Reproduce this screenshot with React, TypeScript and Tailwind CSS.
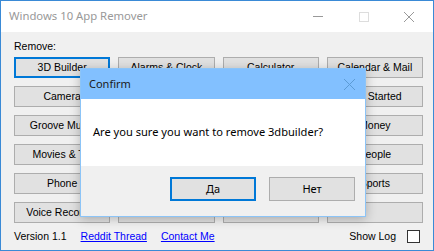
const apps = [
  ['3D Builder', 'Alarms & Clock', 'Calculator', 'Calendar & Mail'],
  ['Camera', 'Get Office', 'Get Skype', 'Get Started'],
  ['Groove Music', 'Maps', 'Solitaire', 'Money'],
  ['Movies & TV', 'News', 'OneNote', 'People'],
  ['Phone', 'Photos', 'Store', 'Sports'],
  ['Voice Recorder', 'Weather', 'Xbox', ''],
]

function WinButton({ label, focused }: { label: string; focused?: boolean }) {
  return (
    <div
      className={
        'h-[21px] flex items-center justify-center bg-[#e1e1e1] text-[10.5px] text-black whitespace-nowrap overflow-hidden ' +
        (focused ? 'border-2 border-[#0078d7]' : 'border border-[#adadad]')
      }
    >
      {label}
    </div>
  )
}

export default function App() {
  return (
    <div
      className="relative w-[434px] h-[251px] bg-[#f0f0f0] border border-[#3a8ad6] overflow-hidden"
      style={{ fontFamily: '"Liberation Sans", Arial, sans-serif' }}
    >
      {/* title bar */}
      <div className="h-[31px] bg-white flex items-center">
        <div
          className="pl-[8px] text-[11.3px] text-[#999999] flex-1"
          style={{ fontFamily: '"Noto Sans", sans-serif' }}
        >
          Windows 10 App Remover
        </div>
        <div className="w-[46px] flex justify-center">
          <div className="w-[10px] h-px bg-[#999999]" />
        </div>
        <div className="w-[46px] flex justify-center">
          <div className="w-[10px] h-[10px] border border-[#dddddd]" />
        </div>
        <div className="w-[46px] flex justify-center pr-[2px]">
          <svg width="10" height="10" viewBox="0 0 10 10">
            <path d="M0 0L10 10M10 0L0 10" stroke="#999999" strokeWidth="1" />
          </svg>
        </div>
      </div>

      {/* body */}
      <div className="px-[13px] pt-[8px]">
        <div className="text-[10.5px] leading-[13px] text-black">Remove:</div>
        <div className="mt-[4px] grid grid-cols-4 gap-x-[8px] gap-y-[8px] w-[409px]">
          {apps.flatMap((row, r) =>
            row.map((label, c) => (
              <WinButton key={r + '-' + c} label={label} focused={r === 0 && c === 0} />
            ))
          )}
        </div>
        <div className="mt-[6px] flex items-center text-[10.5px] h-[15px]">
          <span className="text-black">Version 1.1</span>
          <span className="ml-[14px] text-[#0000ff] underline">Reddit Thread</span>
          <span className="ml-[14px] text-[#0000ff] underline">Contact Me</span>
          <span className="ml-auto text-black">Show Log</span>
          <div className="ml-[11px] w-[13px] h-[13px] bg-white border border-[#333333]" />
        </div>
      </div>

      {/* confirm dialog */}
      <div
        className="absolute left-[79px] top-[67px] w-[286px] h-[149px] bg-white border border-[#8cc4f7] shadow-[0_2px_10px_rgba(0,0,0,0.25)] flex flex-col"
        style={{ fontFamily: '"Noto Sans", sans-serif' }}
      >
        <div className="h-[30px] bg-[#82c0ff] flex items-center justify-between pl-[8px] pr-[10px]">
          <span className="text-[11px] text-[#1a1a1a]">Confirm</span>
          <svg width="11" height="11" viewBox="0 0 11 11">
            <path d="M0 0L11 11M11 0L0 11" stroke="#5b9bd5" strokeWidth="1" />
          </svg>
        </div>
        <div className="h-[67px] flex items-center pl-[12px] text-[11.1px] text-black">
          Are you sure you want to remove 3dbuilder?
        </div>
        <div className="flex-1 bg-[#f0f0f0] flex items-start justify-end gap-[13px] pt-[11px] pr-[10px]">
          <div className="w-[86px] h-[24px] flex items-center justify-center bg-[#e1e1e1] border-2 border-[#0078d7] text-[11px] text-black">
            Да
          </div>
          <div className="w-[86px] h-[24px] flex items-center justify-center bg-[#e1e1e1] border border-[#adadad] text-[11px] text-black">
            Нет
          </div>
        </div>
      </div>
    </div>
  )
}
